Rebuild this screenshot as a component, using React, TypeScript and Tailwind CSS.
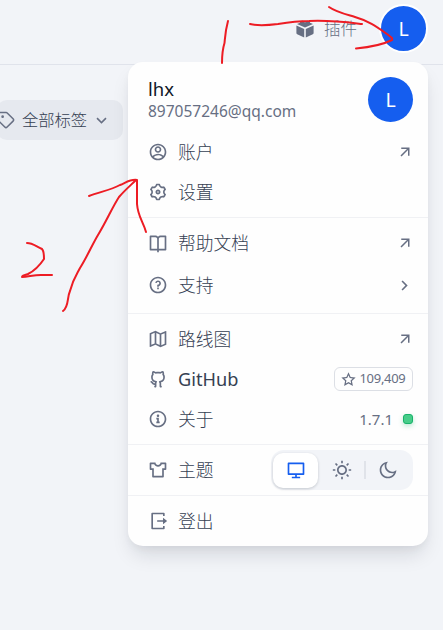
import type { ReactNode } from 'react'
import {
  RiAccountCircleLine, RiArrowDownSLine, RiArrowRightSLine, RiArrowRightUpLine, RiBookOpenLine,
  RiComputerLine, RiGithubLine, RiInformation2Line, RiLogoutBoxRLine, RiMap2Line, RiMoonLine,
  RiQuestionLine, RiSettings3Line, RiStarLine, RiSunLine, RiTShirt2Line,
} from 'react-icons/ri'

type RowProps = { icon: ReactNode; label: string; children?: ReactNode; className?: string; labelClass?: string }

function Row({ icon, label, children, className = 'h-10', labelClass = 'font-light text-[17.800px]' }: RowProps) {
  return (
    <div className={`flex items-center pl-5 pr-[15px] ${className}`}>
      <span className="flex w-[30px] shrink-0 text-[20px] text-[#676f83]">{icon}</span>
      <span className={`grow leading-6 text-[#354052] ${labelClass}`}>{label}</span>
      {children}
    </div>
  )
}

function Section({ children, className = 'pb-[5px]' }: { children: ReactNode; className?: string }) {
  return <div className={`border-t border-[#f0f1f4] pt-[5px] ${className}`}>{children}</div>
}

function External() {
  return <RiArrowRightUpLine className="-mr-px size-[18px] text-[#676f83]" />
}

function TagIcon() {
  return (
    <svg className="size-[18px] shrink-0" viewBox="0 0 24 24" fill="none" stroke="#676f83" strokeWidth="2" strokeLinejoin="round" strokeLinecap="round">
      <path d="M2 4a2 2 0 0 1 2-2h8.200a2 2 0 0 1 1.400.6l7.800 7.800a2.200 2.200 0 0 1 0 3.100l-7.900 7.900a2.200 2.200 0 0 1-3.100 0l-7.800-7.800A2 2 0 0 1 2 12.200Z" />
      <circle cx="7.500" cy="7.500" r=".8" fill="#676f83" />
    </svg>
  )
}

function PluginIcon() {
  return (
    <svg className="h-[18px] w-[18px]" viewBox="0 0 18 18" fill="#676f83">
      <path d="M.4 5.600 8.200 9V17.400L1.200 14.200Q.4 13.800.4 12.900ZM17.600 5.600 9.800 9V17.400l7-3.200q.8-.4.8-1.300ZM1 4 4 2.700V1.700Q6.200.1 8.200 1.400V2.300q.8-.3 1.600 0V1.400q2-1.300 4.200.3v1L17 4 9 7.500Z" />
    </svg>
  )
}

function Annotations() {
  return (
    <svg className="pointer-events-none absolute inset-0 h-[630px] w-[443px]" viewBox="0 0 443 630" fill="none" stroke="#ed1c24" strokeWidth="2" strokeLinecap="round" strokeLinejoin="round">
      <path d="M228 21C225 32 225 39 224.500 43C222 51 222 57 222 63" />
      <path d="M250 24C258 26 270 25 278 24C290 22 296 21 309 21C330 20 345 22 362 24" />
      <path d="M329 7C336 12 345 14 355 17C369 21 377 27 387 34C391 37 393 38 392 40C386 43 372 47 356 48.500" />
      <path d="M27 243C32 243 34 245 42 249C44 251 44 255 44 259C38 268 32 272 28 274C24 275 22 276 22 277C28 277 33 275 41 275H52" />
      <path d="M63 311C69 307 67 297 70 291C73 279 77 274 80 268C87 257 92 245 98 235C106 222 113 206 119 197C125 190 131 185 136 180" />
      <path d="M89 196C99 192 111 190 120 185C127 182 131 179 137 180V204C138 217 143 221 146 232" />
    </svg>
  )
}

export default function App() {
  return (
    <div className="relative h-[630px] w-[443px] overflow-hidden bg-[#f2f4f8] font-['Noto_Sans','Noto_Sans_CJK_SC',sans-serif]">
      <header className="flex h-[65px] items-start justify-end border-b border-[#e0e3eb] pr-[15px] pt-[4px]">
        <div className="mt-[16px] flex items-center">
          <PluginIcon />
          <span className="ml-[10px] text-[16.500px] font-light leading-[18px] text-[#676f83]">插件</span>
        </div>
        <div className="ml-[22px] flex size-[49px] items-center justify-center rounded-full border-2 border-white bg-[#155eef] text-[19.500px] text-white">L</div>
      </header>
      <div className="-ml-[3px] mt-[35px] flex h-10 w-[126px] items-center rounded-[10px] bg-[#e6e9ef]">
        <TagIcon />
        <span className="ml-[7px] text-[16.300px] font-light text-[#354052]">全部标签</span>
        <RiArrowDownSLine className="ml-[5px] size-[19px] text-[#676f83]" />
      </div>

      <div className="absolute left-[128px] top-[62px] h-[484px] w-[300px] rounded-[15px] bg-[#fefefe] shadow-[0_12px_20px_-4px_rgba(16,24,40,0.13),0_4px_8px_-2px_rgba(16,24,40,0.05)]">
        <div className="flex h-[70px] items-start justify-between pl-5 pr-[15px] pt-[15px]">
          <div>
            <div className="text-[18.500px] leading-[24px] text-[#101828]">lhx</div>
            <div className="text-[15.500px] leading-[20px] text-[#676f83]">897057246@qq.com</div>
          </div>
          <div className="flex size-[45px] items-center justify-center rounded-full bg-[#155eef] text-[19.500px] text-white">L</div>
        </div>
        <div className="pb-[5px]">
          <Row icon={<RiAccountCircleLine />} label="账户"><External /></Row>
          <Row icon={<RiSettings3Line />} label="设置" />
        </div>
        <Section className="pb-[6px]">
          <Row icon={<RiBookOpenLine />} label="帮助文档"><External /></Row>
          <Row icon={<RiQuestionLine />} label="支持" className="h-[44px]">
            <RiArrowRightSLine className="-mr-px size-[19px] text-[#676f83]" />
          </Row>
        </Section>
        <Section>
          <Row icon={<RiMap2Line />} label="路线图"><External /></Row>
          <Row icon={<RiGithubLine />} label="GitHub" labelClass="text-[18.200px]">
            <div className="flex h-6 w-[79px] items-center justify-center gap-[3px] rounded-[6px] border border-[#dcdfe5] text-[#676f83]">
              <RiStarLine className="size-[15px]" />
              <span className="text-[13px] tracking-[-0.3px]">109,409</span>
            </div>
          </Row>
          <Row icon={<RiInformation2Line />} label="关于">
            <span className="mr-[10px] text-[15px] text-[#676f83]">1.7.1</span>
            <span className="size-[10px] rounded-[3px] border border-[#17b26a] bg-[#47cd89] shadow-[0_2px_5px_rgba(23,178,106,0.3)]" />
          </Row>
        </Section>
        <Section>
          <Row icon={<RiTShirt2Line />} label="主题">
            <div className="flex h-10 w-[142px] items-center rounded-[13px] bg-[#f2f4f8] pl-[2px] text-[20px] text-[#676f83]">
              <span className="flex h-[35px] w-[45px] items-center justify-center rounded-[10px] bg-white text-[#155eef] shadow-[0_1px_3px_rgba(16,24,40,0.2)]"><RiComputerLine /></span>
              <span className="flex w-[46px] justify-center pl-[2px]"><RiSunLine /></span>
              <span className="h-[18px] w-[2px] bg-[#e0e3e9]" />
              <span className="flex w-[43px] justify-center"><RiMoonLine /></span>
            </div>
          </Row>
        </Section>
        <Section>
          <Row icon={<RiLogoutBoxRLine />} label="登出" />
        </Section>
      </div>
      <Annotations />
    </div>
  )
}
